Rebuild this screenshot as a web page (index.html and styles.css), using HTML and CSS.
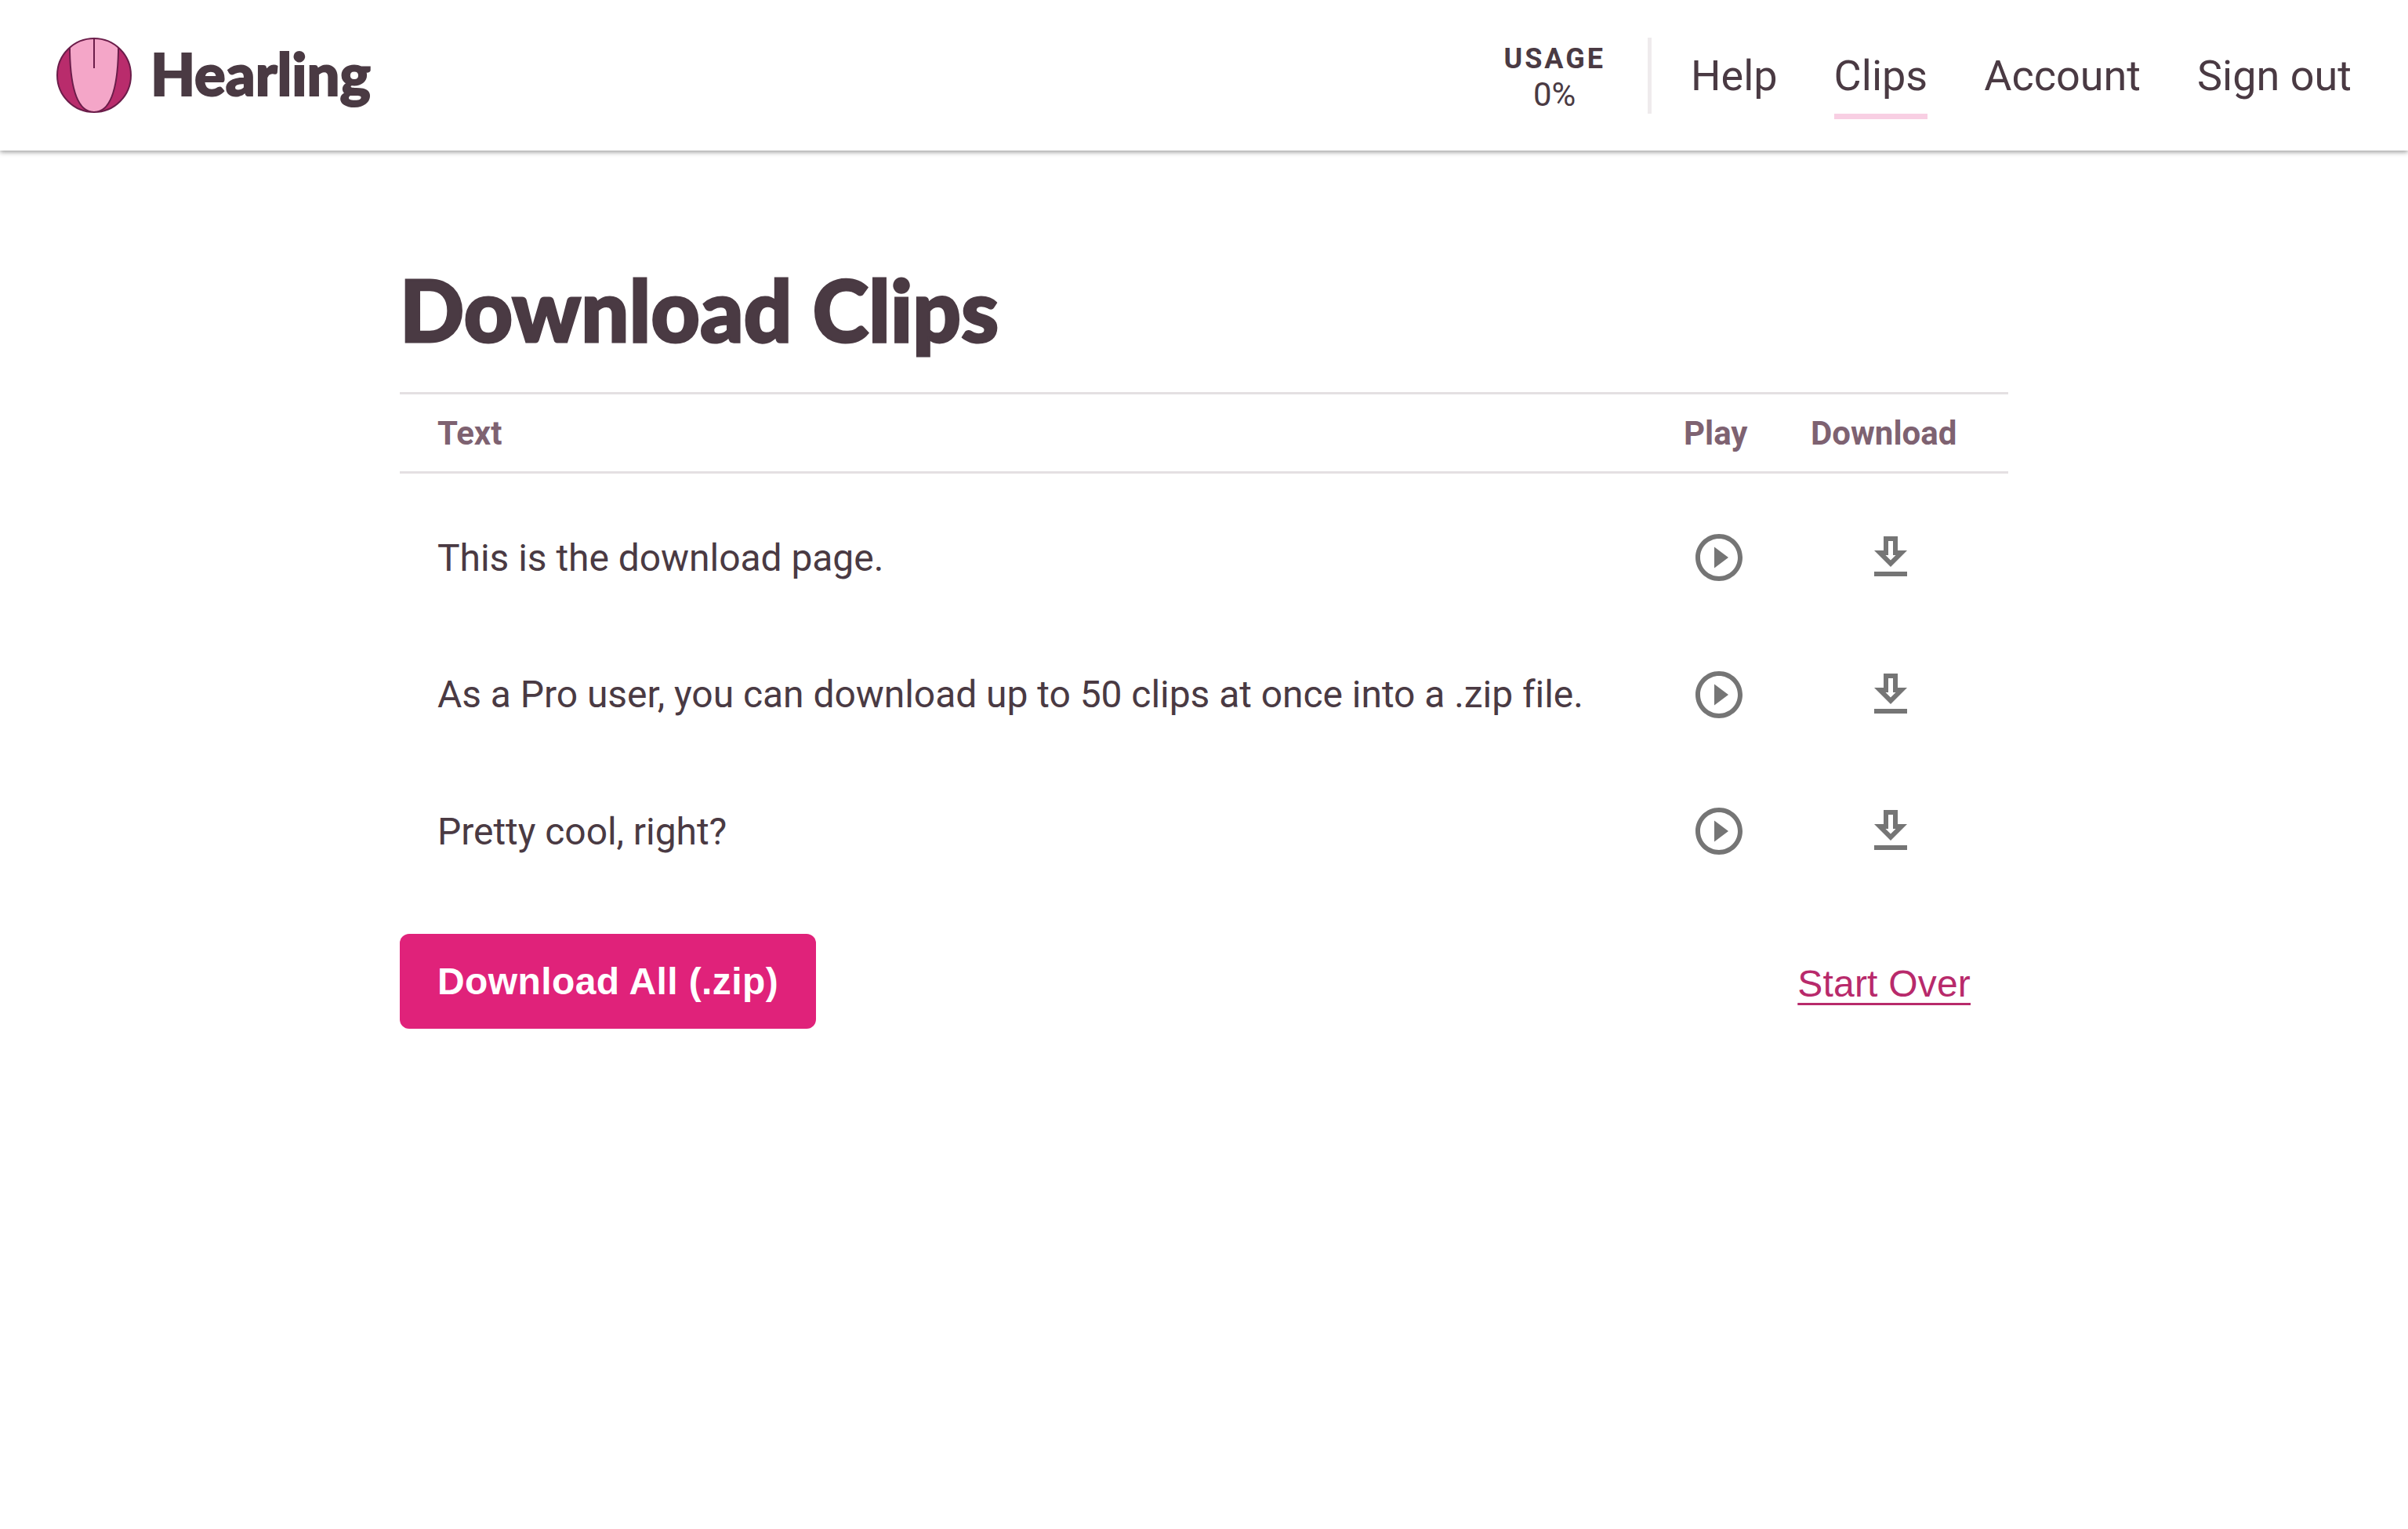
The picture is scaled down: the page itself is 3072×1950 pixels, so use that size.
FILE: index.html
```html
<!DOCTYPE html>
<html lang="en">
<head>
    <meta charset="UTF-8">
    <title>Hearling - Download Clips</title>
    <link rel="stylesheet" href="styles.css">
</head>
<body>
    <header class="topbar">
        <a class="brand" href="#">
            <svg class="brand-logo" viewBox="0 0 96 96">
                <defs>
                    <clipPath id="logoClip"><circle cx="48" cy="48" r="47"/></clipPath>
                </defs>
                <circle cx="48" cy="48" r="47" fill="#b92c6c"/>
                <g clip-path="url(#logoClip)">
                    <path d="M17 -2V18C18 62 26 95 48 95C70 95 78 62 79 18V-2Z" fill="#f4a6c8" stroke="#6b1d4a" stroke-width="2"/>
                    <path d="M48 0V39" stroke="#6b1d4a" stroke-width="2" fill="none"/>
                </g>
                <circle cx="48" cy="48" r="47" fill="none" stroke="#6b1d4a" stroke-width="2"/>
            </svg>
            <span class="brand-name">Hearling</span>
        </a>
        <div class="topbar-right">
            <div class="usage">
                <div class="usage-label">USAGE</div>
                <div class="usage-value">0%</div>
            </div>
            <nav class="nav">
                <a href="#">Help</a>
                <a href="#" class="active">Clips</a>
                <a href="#">Account</a>
                <a href="#">Sign out</a>
            </nav>
        </div>
    </header>

    <main class="content">
        <h1 class="title">Download Clips</h1>
        <table class="clips">
            <thead>
                <tr>
                    <th class="col-text">Text</th>
                    <th class="col-play">Play</th>
                    <th class="col-download">Download</th>
                </tr>
            </thead>
            <tbody>
                <tr>
                    <td class="col-text">This is the download page.</td>
                    <td class="col-play"><svg class="icon" viewBox="0 0 24 24"><path d="M10 16.5l6-4.5-6-4.5v9zM12 2C6.48 2 2 6.48 2 12s4.48 10 10 10 10-4.48 10-10S17.52 2 12 2zm0 18c-4.41 0-8-3.59-8-8s3.59-8 8-8 8 3.59 8 8-3.59 8-8 8z"/></svg></td>
                    <td class="col-download"><svg class="icon" viewBox="0 0 24 24"><path d="M19 9h-4V3H9v6H5l7 7 7-7zm-8 2V5h2v6h1.17L12 13.17 9.83 11H11zm-6 7h14v2H5z"/></svg></td>
                </tr>
                <tr>
                    <td class="col-text">As a Pro user, you can download up to 50 clips at once into a .zip file.</td>
                    <td class="col-play"><svg class="icon" viewBox="0 0 24 24"><path d="M10 16.5l6-4.5-6-4.5v9zM12 2C6.48 2 2 6.48 2 12s4.48 10 10 10 10-4.48 10-10S17.52 2 12 2zm0 18c-4.41 0-8-3.59-8-8s3.59-8 8-8 8 3.59 8 8-3.59 8-8 8z"/></svg></td>
                    <td class="col-download"><svg class="icon" viewBox="0 0 24 24"><path d="M19 9h-4V3H9v6H5l7 7 7-7zm-8 2V5h2v6h1.17L12 13.17 9.83 11H11zm-6 7h14v2H5z"/></svg></td>
                </tr>
                <tr>
                    <td class="col-text">Pretty cool, right?</td>
                    <td class="col-play"><svg class="icon" viewBox="0 0 24 24"><path d="M10 16.5l6-4.5-6-4.5v9zM12 2C6.48 2 2 6.48 2 12s4.48 10 10 10 10-4.48 10-10S17.52 2 12 2zm0 18c-4.41 0-8-3.59-8-8s3.59-8 8-8 8 3.59 8 8-3.59 8-8 8z"/></svg></td>
                    <td class="col-download"><svg class="icon" viewBox="0 0 24 24"><path d="M19 9h-4V3H9v6H5l7 7 7-7zm-8 2V5h2v6h1.17L12 13.17 9.83 11H11zm-6 7h14v2H5z"/></svg></td>
                </tr>
            </tbody>
        </table>
        <div class="actions">
            <button class="button">Download All (.zip)</button>
            <a class="start-over" href="#">Start Over</a>
        </div>
    </main>
</body>
</html>
```

FILE: styles.css
```css
* {
    box-sizing: border-box;
}
body {
    margin: 0;
    background-color: white;
    color: #4a3a43;
    font-family: Roboto, sans-serif;
}
a {
    color: inherit;
    text-decoration: none;
}
.topbar {
    height: 192px;
    padding: 0 72px;
    display: flex;
    align-items: center;
    justify-content: space-between;
    background-color: white;
    box-shadow: 0 2px 6px rgba(0,0,0,0.4);
}
.brand {
    display: flex;
    align-items: center;
    gap: 24px;
}
.brand-logo {
    width: 96px;
    height: 96px;
}
.brand-name {
    margin-bottom: 6px;
    font-family: Lato, sans-serif;
    font-weight: 900;
    font-size: 74px;
    -webkit-text-stroke: 2px #4a3a43;
}
.topbar-right {
    display: flex;
    align-items: center;
}
.usage {
    height: 96px;
    padding-right: 54px;
    text-align: center;
}
.usage-label {
    font-weight: 700;
    font-size: 36px;
    line-height: 54px;
    letter-spacing: 3px;
    white-space: nowrap;
}
.usage-value {
    font-size: 42px;
    line-height: 38px;
}
.nav {
    display: flex;
    gap: 72px;
    height: 97px;
    padding-left: 50px;
    border-left: 5px solid #efebed;
    font-size: 54px;
}
.nav a {
    height: 104px;
    line-height: 97px;
}
.nav a.active {
    border-bottom: 7px solid #f8cfe3;
}
.content {
    width: 2052px;
    margin-left: 510px;
}
.title {
    margin: 126px 0 0;
    height: 182px;
    font-family: Lato, sans-serif;
    font-weight: 900;
    font-size: 108px;
    line-height: 152px;
    letter-spacing: 0.3px;
    white-space: nowrap;
    -webkit-text-stroke: 3px #4a3a43;
}
.clips {
    width: 100%;
    table-layout: fixed;
    border-collapse: collapse;
    border-top: 3px solid #e4e0e2;
}
.clips th {
    height: 101px;
    padding: 0;
    text-align: left;
    font-size: 42px;
    font-weight: 700;
    color: #7e6271;
    border-bottom: 3px solid #e4e0e2;
}
.clips tbody::before {
    content: "";
    display: block;
    height: 20px;
}
.clips td {
    height: 174.5px;
    padding: 0;
    font-size: 48px;
    letter-spacing: -0.05px;
}
.col-text {
    width: 1615px;
    padding-left: 48px !important;
}
.col-play {
    width: 147px;
}
th.col-play {
    padding-left: 23px;
}
td.col-play {
    padding-left: 32px;
}
th.col-download {
    padding-left: 38px;
}
td.col-download {
    padding-left: 104px;
}
.icon {
    display: block;
    width: 72px;
    height: 72px;
    fill: #757575;
}
.actions {
    display: flex;
    justify-content: space-between;
    align-items: center;
    margin-top: 43px;
    padding-right: 48px;
}
.button {
    height: 121px;
    padding: 0 48px;
    border: none;
    border-radius: 12px;
    background-color: #e0227a;
    color: white;
    font-family: "Liberation Sans", sans-serif;
    font-weight: 700;
    font-size: 48px;
    letter-spacing: 0.4px;
    cursor: pointer;
}
.start-over {
    position: relative;
    top: 3px;
    font-family: "Liberation Sans", sans-serif;
    font-size: 48px;
    letter-spacing: 0.2px;
    color: #b82a6b;
    text-decoration: underline;
    text-underline-offset: 8px;
    text-decoration-thickness: 3px;
}
```
